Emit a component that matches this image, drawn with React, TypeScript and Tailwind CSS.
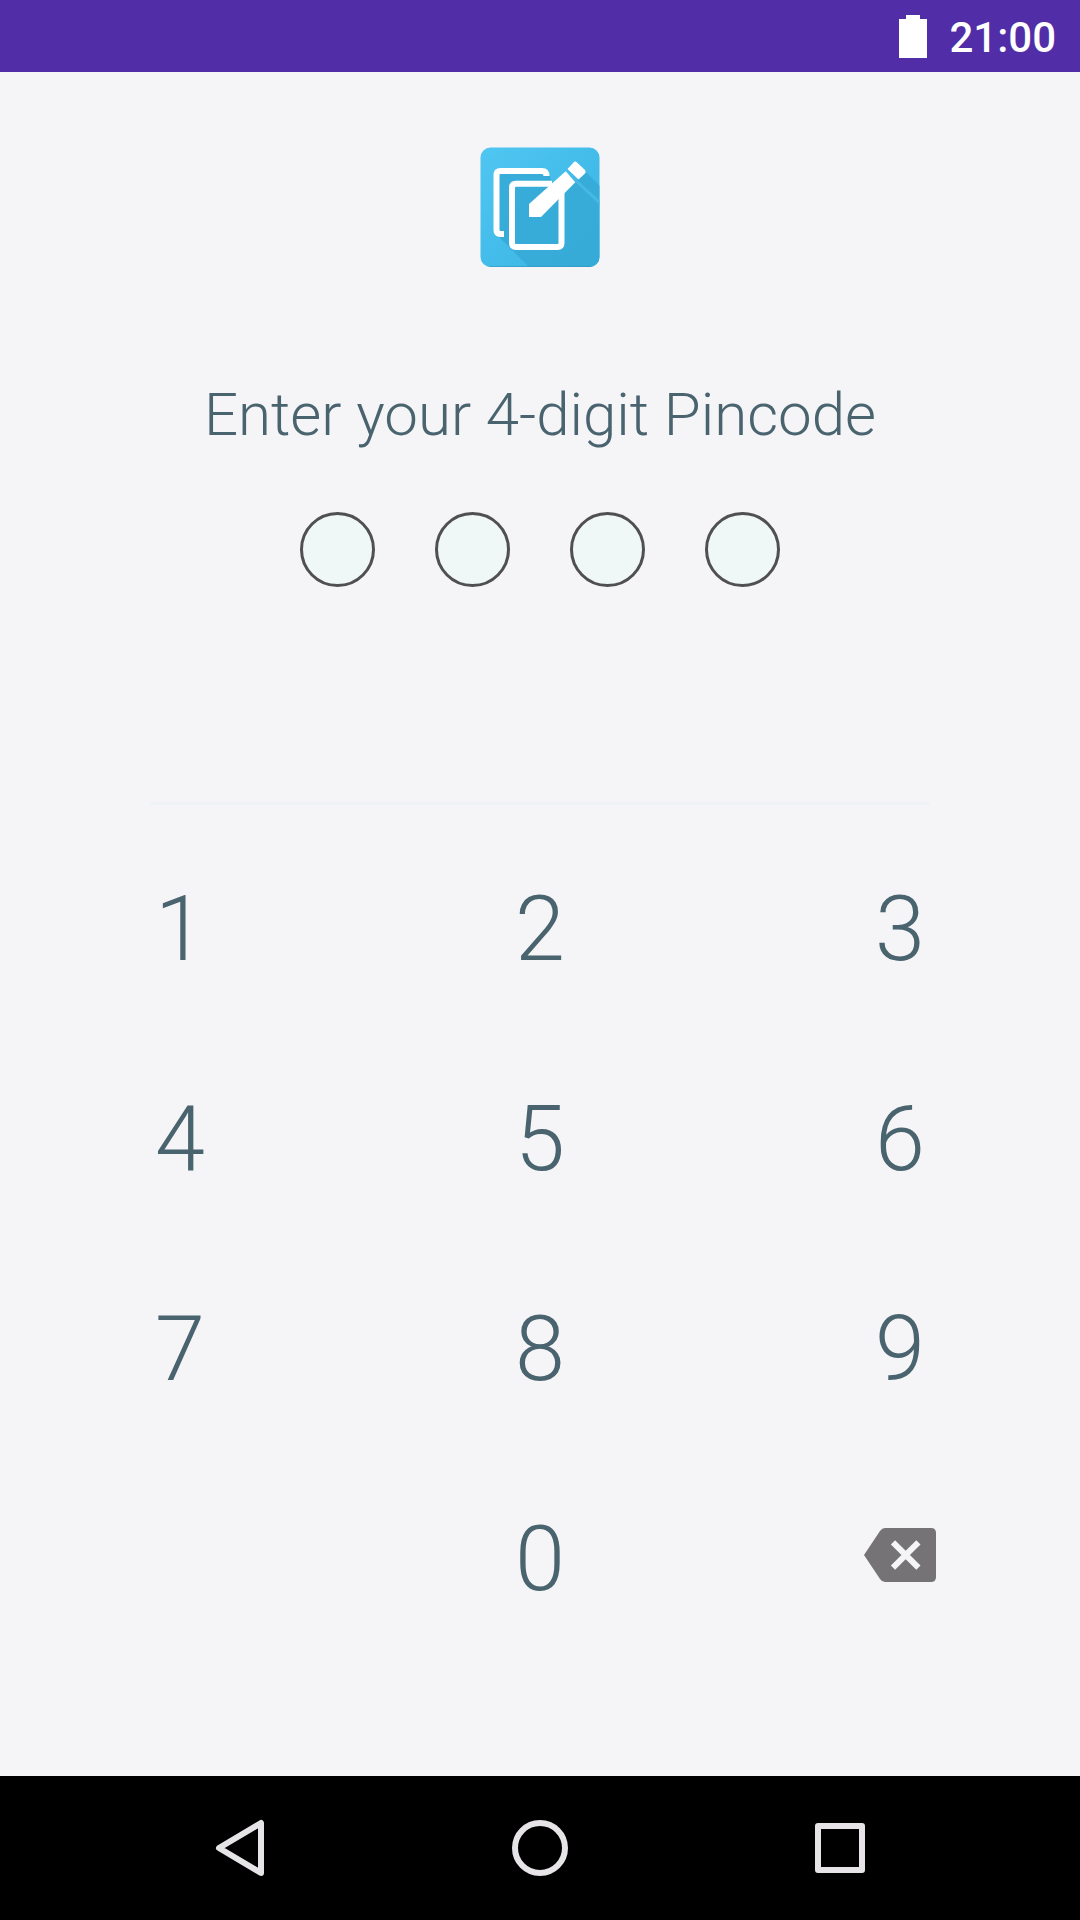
import React from 'react';

const keys = ['1', '2', '3', '4', '5', '6', '7', '8', '9', '', '0', 'back'];

function Logo() {
    return (
        <svg viewBox="0 0 120 120" className="size-[120px]">
            <defs>
                <linearGradient id="tile" x1="0" y1="0" x2="1" y2="1">
                    <stop offset="0" stopColor="#50c6f2" />
                    <stop offset="1" stopColor="#38b3e2" />
                </linearGradient>
                <clipPath id="tileClip">
                    <rect x="0.5" y="0.5" width="119" height="119.500" rx="10" />
                </clipPath>
            </defs>
            <g clipPath="url(#tileClip)">
                <rect width="120" height="120" fill="url(#tile)" />
                {/* long shadow */}
                <path d="M15 86V24H68L72 36L96 34L104 23L120 39V120H49Z" fill="#36a9d6" opacity="0.85" />
                <path d="M93 29L120 54V58L91 31Z" fill="#47b9e5" />
                <path d="M0 119.5H120" stroke="#3095bd" opacity="0.6" />
            </g>
            <g fill="none" stroke="#fff" strokeWidth="6">
                <path d="M24 87H20.5Q16.5 87 16.5 83V28Q16.5 24 20.5 24H62Q66.500 24 66.500 29" />
                <path d="M72 36.700H36Q32 36.700 32 40.700V96Q32 100 36 100H77.500Q81.500 100 81.500 96V46" />
            </g>
            <path d="M49 70V57L85.700 24.300L95.300 35.300L61 70Z" fill="#fff" />
            <path d="M87.500 22L93.500 15.500Q95 13.500 97 15.500L105 23Q106.500 25 105 26.500L98.500 32.500Z" fill="#fff" />
        </svg>
    );
}

function Backspace() {
    return (
        <svg viewBox="0 0 72 54" className="w-[72px] h-[54px]">
            <path d="M21 0H67Q72 0 72 5V49Q72 54 67 54H21Q18 54 16 51L0 27L16 3Q18 0 21 0Z" fill="#757376" />
            <path d="M29 14.300L54.400 39.700M54.400 14.300L29 39.700" stroke="#f5f4f6" strokeWidth="6" />
        </svg>
    );
}

export default function App() {
    return (
        <div className="flex h-[1920px] w-[1080px] flex-col overflow-hidden bg-[#f5f4f6] font-['Roboto',sans-serif] text-[#4a646f]">
            <header className="flex h-[72px] items-center justify-end gap-[22px] bg-[#512da8] pr-6 text-white">
                <svg viewBox="0 0 28 43" className="w-7 h-[43px]">
                    <path d="M7 0H21V4H28V43H0V4H7Z" fill="#fff" />
                </svg>
                <span className="pt-[3px] text-[42px] font-medium leading-none">21:00</span>
            </header>
            <main className="flex flex-1 flex-col items-center pt-[75px]">
                <Logo />
                <h1 className="mt-[110px] text-[60px] font-light leading-[76px] whitespace-nowrap">Enter your 4-digit Pincode</h1>
                <div className="mt-[59px] flex gap-[60px]">
                    {[0, 1, 2, 3].map((dot) => (
                        <span key={dot} className="size-[75px] rounded-full border-[3px] border-[#504f52] bg-[#eff7f7]" />
                    ))}
                </div>
                <div className="mt-[215px] h-[3px] w-[780px] bg-[#eff3f5]" />
                <div className="mt-[19px] grid grid-cols-3 auto-rows-[210px] w-[1080px]">
                    {keys.map((k, i) => (
                        <div key={i} className="flex items-center justify-center text-[90px] font-[330]">
                            {k === 'back' ? <div className="pb-[8px]"><Backspace /></div> : k}
                        </div>
                    ))}
                </div>
            </main>
            <footer className="flex h-36 items-center justify-center bg-black">
                <svg viewBox="0 0 1080 144" className="h-36 w-[1080px]" fill="none" stroke="#e6e4e7" strokeWidth="6" strokeLinejoin="round">
                    <path d="M261 47V97L219 72Z" />
                    <circle cx="540" cy="72" r="25" />
                    <rect x="818" y="50" width="44" height="44" />
                </svg>
            </footer>
        </div>
    );
}
